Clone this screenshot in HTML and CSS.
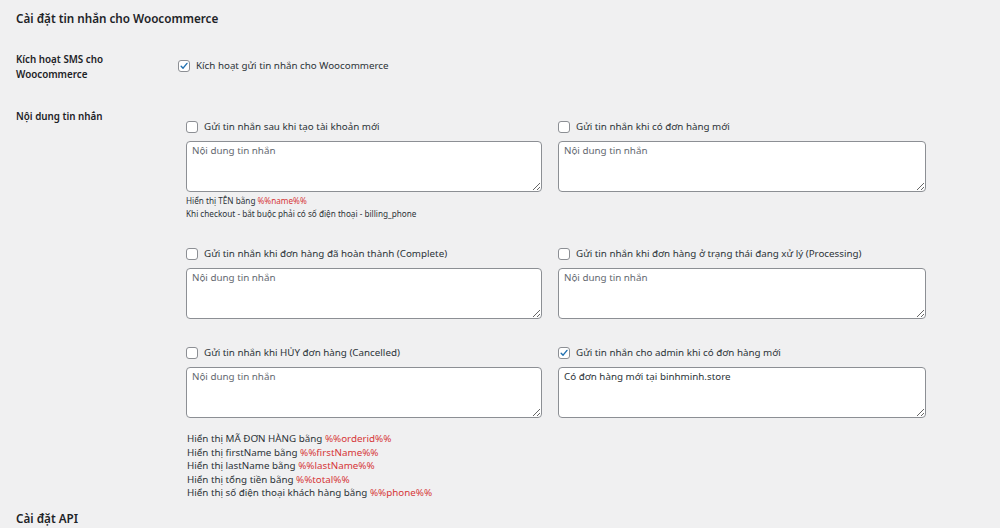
FILE: index.html
```html
<!DOCTYPE html>
<html lang="vi">
<head>
<meta charset="utf-8">
<title>Cài đặt tin nhắn cho Woocommerce</title>
<link rel="stylesheet" href="styles.css">
</head>
<body>
<div class="wrap">
  <h2 class="title">Cài đặt tin nhắn cho Woocommerce</h2>

  <div class="row row-enable">
    <div class="th">Kích hoạt SMS cho Woocommerce</div>
    <div class="td">
      <label class="check">
        <span class="cb checked"><svg viewBox="0 0 12 12" width="12" height="12"><path d="M2.6 6.2 L4.9 8.6 L9.6 2.9" fill="none" stroke="#2271b1" stroke-width="1.7" stroke-linecap="round" stroke-linejoin="round"/></svg></span>
        <span>Kích hoạt gửi tin nhắn cho Woocommerce</span>
      </label>
    </div>
  </div>

  <div class="row row-content">
    <div class="th">Nội dung tin nhắn</div>
    <div class="td td-grid">
      <div class="grid">
        <div class="cell">
          <label class="check"><span class="cb"></span><span>Gửi tin nhắn sau khi tạo tài khoản mới</span></label>
          <textarea class="msg" placeholder="Nội dung tin nhắn"></textarea>
          <p class="hint-small">Hiển thị TÊN bằng <span class="var">%%name%%</span><br>Khi checkout - bắt buộc phải có số điện thoại - billing_phone</p>
        </div>
        <div class="cell">
          <label class="check"><span class="cb"></span><span>Gửi tin nhắn khi có đơn hàng mới</span></label>
          <textarea class="msg" placeholder="Nội dung tin nhắn"></textarea>
        </div>
        <div class="cell">
          <label class="check"><span class="cb"></span><span>Gửi tin nhắn khi đơn hàng đã hoàn thành (Complete)</span></label>
          <textarea class="msg" placeholder="Nội dung tin nhắn"></textarea>
        </div>
        <div class="cell">
          <label class="check"><span class="cb"></span><span>Gửi tin nhắn khi đơn hàng ở trạng thái đang xử lý (Processing)</span></label>
          <textarea class="msg" placeholder="Nội dung tin nhắn"></textarea>
        </div>
        <div class="cell">
          <label class="check"><span class="cb"></span><span>Gửi tin nhắn khi HỦY đơn hàng (Cancelled)</span></label>
          <textarea class="msg" placeholder="Nội dung tin nhắn"></textarea>
        </div>
        <div class="cell">
          <label class="check"><span class="cb checked"><svg viewBox="0 0 12 12" width="12" height="12"><path d="M2.6 6.2 L4.9 8.6 L9.6 2.9" fill="none" stroke="#2271b1" stroke-width="1.7" stroke-linecap="round" stroke-linejoin="round"/></svg></span><span>Gửi tin nhắn cho admin khi có đơn hàng mới</span></label>
          <textarea class="msg">Có đơn hàng mới tại binhminh.store</textarea>
        </div>
      </div>
      <p class="hints">
        Hiển thị MÃ ĐƠN HÀNG bằng <span class="var">%%orderid%%</span><br>
        Hiển thị firstName bằng <span class="var">%%firstName%%</span><br>
        Hiển thị lastName bằng <span class="var">%%lastName%%</span><br>
        Hiển thị tổng tiền bằng <span class="var">%%total%%</span><br>
        Hiển thị số điện thoại khách hàng bằng <span class="var">%%phone%%</span>
      </p>
    </div>
  </div>

  <h2 class="title title-api">Cài đặt API</h2>
</div>
</body>
</html>
```

FILE: styles.css
```css
html, body {
  margin: 0;
  padding: 0;
  background: #f0f0f1;
}
body {
  font-family: "Noto Sans", "Open Sans", sans-serif;
  color: #1d2327;
  font-size: 10px;
}
.wrap {
  padding: 8px 0 0 16px;
}
.title {
  margin: 0;
  font-size: 11.7px;
  line-height: 20px;
  font-weight: 600;
  color: #1d2327;
}
.row {
  display: flex;
  align-items: flex-start;
}
.th {
  width: 128px;
  margin-right: 34px;
  font-size: 9.8px;
  font-weight: 600;
  line-height: 15px;
  color: #1d2327;
}
.row-enable {
  margin-top: 24px;
}
.row-enable .td {
  padding-top: 7px;
}
.row-content {
  margin-top: 27px;
}
.td-grid {
  padding-top: 11px;
  padding-left: 8px;
}
.check {
  display: flex;
  align-items: center;
  gap: 6px;
  font-size: 9.8px;
  line-height: 14px;
  color: #2c3338;
}
.cb {
  width: 10px;
  height: 10px;
  border: 1px solid #8c8f94;
  border-radius: 3px;
  background: #fff;
  flex: none;
  display: flex;
  align-items: center;
  justify-content: center;
}
.cb svg {
  display: block;
}
.grid {
  display: grid;
  grid-template-columns: 356px 368px;
  column-gap: 16px;
  row-gap: 27px;
}
.msg {
  display: block;
  box-sizing: border-box;
  width: 100%;
  height: 51px;
  margin-top: 7px;
  padding: 1px 5px;
  border: 1px solid #8c8f94;
  border-radius: 4px;
  background: #fff;
  font-family: "Noto Sans", "Open Sans", sans-serif;
  font-size: 9.8px;
  line-height: 15px;
  color: #2c3338;
}
.msg::placeholder {
  color: #646970;
}
.hint-small {
  margin: 2px 0 0;
  font-size: 8.2px;
  line-height: 13px;
  color: #2c3338;
}
.hints {
  margin: 14px 0 0 1px;
  font-size: 9.8px;
  line-height: 13.5px;
  color: #2c3338;
}
.var {
  color: #d63638;
}
.title-api {
  margin-top: 8px;
}
```
